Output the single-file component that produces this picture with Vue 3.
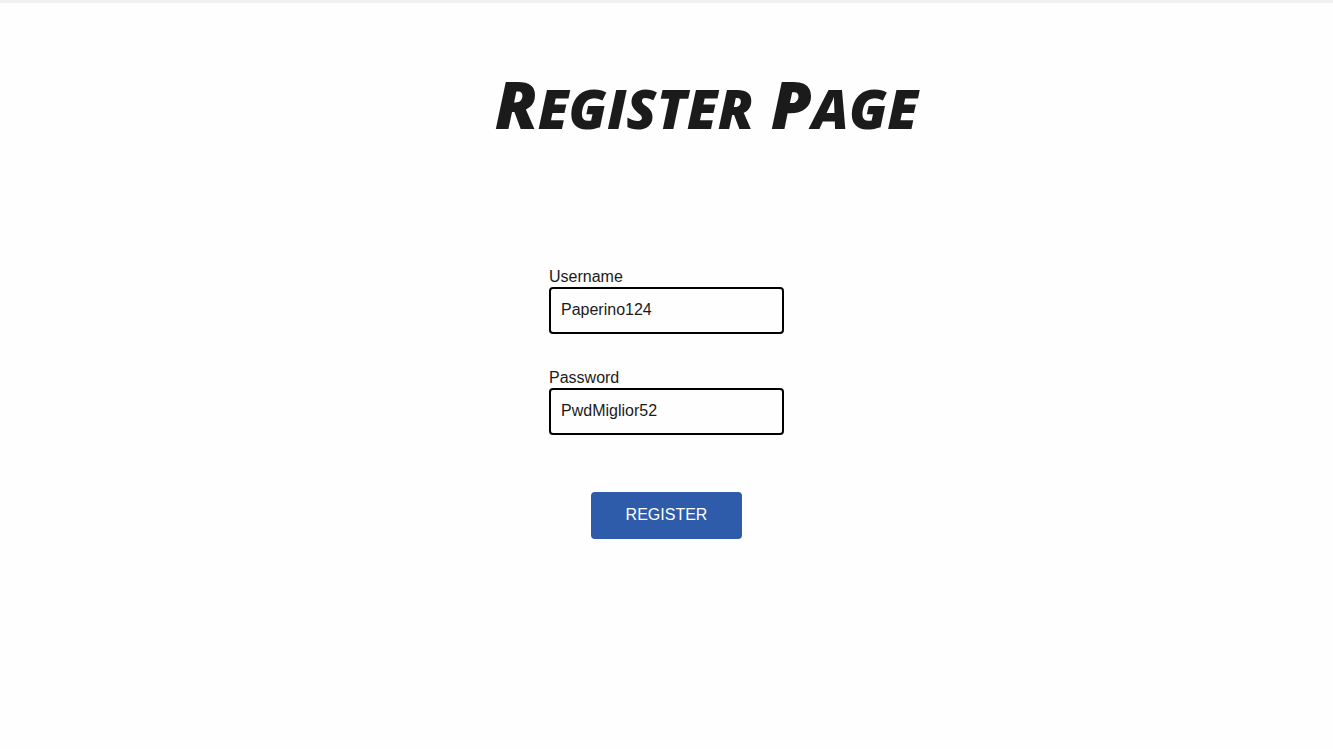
<script setup>
import { ref } from 'vue'

const username = ref('Paperino124')
const password = ref('PwdMiglior52')
</script>

<template>
  <main class="page">
    <h1 class="title"><span class="initial">R</span>EGISTER<span class="initial"> P</span>AGE</h1>
    <form class="form" @submit.prevent>
      <div class="field">
        <label for="username">Username</label>
        <input id="username" v-model="username" type="text" autocomplete="off" spellcheck="false" />
      </div>
      <div class="field">
        <label for="password">Password</label>
        <input id="password" v-model="password" type="text" autocomplete="off" spellcheck="false" />
      </div>
      <button class="submit" type="submit">REGISTER</button>
    </form>
  </main>
</template>

<style>
body {
  margin: 0;
  background: #fefefe;
}
</style>

<style scoped>
.page {
  box-sizing: border-box;
  min-height: 100vh;
  border-top: 3px solid #f1f1f1;
  color: #1b1b1b;
  font-family: "Liberation Sans", Arial, sans-serif;
  font-size: 16px;
}

.title {
  margin: 0;
  padding: 60px 0 0 80px;
  text-align: center;
  font-family: "Permanent Marker", "Open Sans", sans-serif;
  font-size: 55px;
  font-style: italic;
  font-weight: 800;
  line-height: 80px;
}

.initial {
  font-size: 66px;
}

.form {
  display: flex;
  flex-direction: column;
  align-items: center;
  margin-top: 119px;
}

.field {
  display: flex;
  flex-direction: column;
  width: 235px;
  margin-bottom: 34px;
}

.field label {
  line-height: 20px;
}

.field input {
  box-sizing: border-box;
  width: 100%;
  height: 47px;
  padding: 0 10px 2px;
  border: 2px solid #000;
  border-radius: 4px;
  outline: none;
  background: #fefefe;
  color: inherit;
  font: inherit;
}

.submit {
  height: 47px;
  margin-top: 23px;
  padding: 0 35px 2px;
  border: 0;
  border-radius: 4px;
  background: #2f5bab;
  color: #fff;
  font: inherit;
  cursor: pointer;
}
</style>
